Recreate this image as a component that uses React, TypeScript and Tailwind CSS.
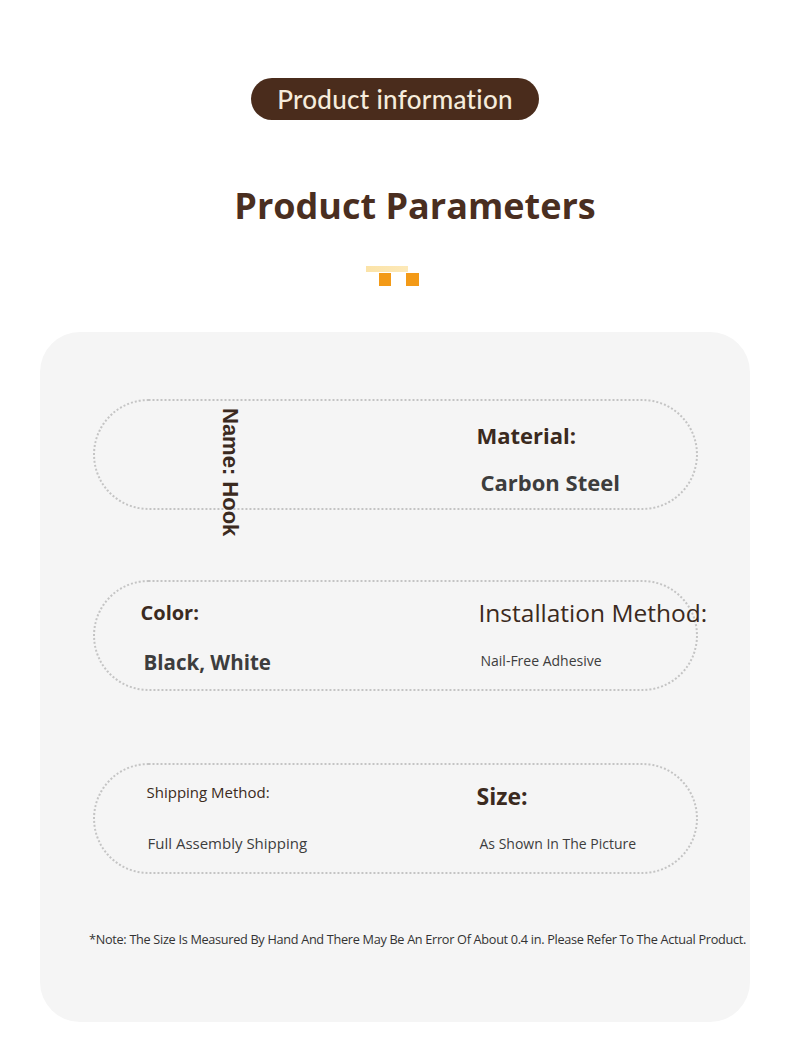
import React from "react";

const label = "text-[#3b2a20]";
const value = "text-[#3d3d3d]";

export default function App() {
  return (
    <div className="w-[790px] h-[1038px] bg-white flex flex-col items-center font-['Open_Sans',sans-serif] overflow-hidden">
      <div className="mt-[78px] h-[42px] w-[288px] rounded-full bg-[#4a2c1c] flex items-center justify-center">
        <span className="font-['Lato',sans-serif] text-[26px] font-medium tracking-[0.3px] text-[#f6ecdc] leading-none">
          Product information
        </span>
      </div>
      <h1 className="mt-[62px] ml-[40px] text-[36px] font-bold leading-[48px] text-[#4a2e20]">
        Product Parameters
      </h1>
      <div className="mt-[36px] ml-[-5px] w-[54px] h-[22px] flex flex-col">
        <div className="h-[6px] w-[42px] bg-gradient-to-r from-[#fbe3a8] to-[#fde9b8]" />
        <div className="flex gap-[15px] ml-[13px] mt-[1px]">
          <div className="w-[12px] h-[13px] bg-[#f39a17]" />
          <div className="w-[13px] h-[13px] bg-[#f39a17]" />
        </div>
      </div>
      <div className="mt-[44px] w-[710px] h-[690px] rounded-[40px] bg-[#f5f5f5] flex flex-col items-center pt-[67px]">
        {/* Row 1 */}
        <div className="w-[605px] h-[111px] rounded-full border-2 border-dotted border-[#c4c4c4] grid grid-cols-[383px_1fr]">
          <div className="pl-[123px] pt-[7px]">
            <div className={`[writing-mode:vertical-rl] font-['Liberation_Sans',sans-serif] font-bold text-[22px] leading-[24px] ${label}`}>
              Name: Hook
            </div>
          </div>
          <div className="flex flex-col">
            <div className={`mt-[19px] ml-[-1px] text-[22px] font-bold leading-[30px] ${label}`}>Material:</div>
            <div className={`mt-[17px] ml-[3px] text-[22px] font-bold leading-[30px] ${value}`}>Carbon Steel</div>
          </div>
        </div>
        {/* Row 2 */}
        <div className="mt-[70px] w-[605px] h-[111px] rounded-full border-2 border-dotted border-[#c4c4c4] grid grid-cols-[383px_1fr]">
          <div className="flex flex-col pl-[46px]">
            <div className={`mt-[17px] text-[20px] font-bold leading-[28px] ${label}`}>Color:</div>
            <div className={`mt-[21px] ml-[3px] text-[20.5px] font-bold leading-[28px] ${value}`}>Black, White</div>
          </div>
          <div className="flex flex-col">
            <div className={`mt-[15px] ml-[1px] text-[24.5px] leading-[32px] whitespace-nowrap ${label}`}>Installation Method:</div>
            <div className={`mt-[23px] ml-[3px] text-[14px] leading-[18px] ${value}`}>Nail-Free Adhesive</div>
          </div>
        </div>
        {/* Row 3 */}
        <div className="mt-[72px] w-[605px] h-[111px] rounded-full border-2 border-dotted border-[#c4c4c4] grid grid-cols-[383px_1fr]">
          <div className="flex flex-col pl-[52px]">
            <div className={`mt-[17px] text-[15px] leading-[20px] ${label}`}>Shipping Method:</div>
            <div className={`mt-[31px] ml-[1px] text-[15px] leading-[20px] ${value}`}>Full Assembly Shipping</div>
          </div>
          <div className="flex flex-col">
            <div className={`mt-[15px] ml-[-1px] text-[23px] font-bold leading-[32px] ${label}`}>Size:</div>
            <div className={`mt-[22px] ml-[2px] text-[14px] leading-[20px] ${value}`}>As Shown In The Picture</div>
          </div>
        </div>
        <div className="mt-[57px] ml-[45px] text-[12.7px] leading-[16px] whitespace-nowrap tracking-[-0.3px] text-[#333]">
          *Note: The Size Is Measured By Hand And There May Be An Error Of About 0.4 in. Please Refer To The Actual Product.
        </div>
      </div>
    </div>
  );
}
